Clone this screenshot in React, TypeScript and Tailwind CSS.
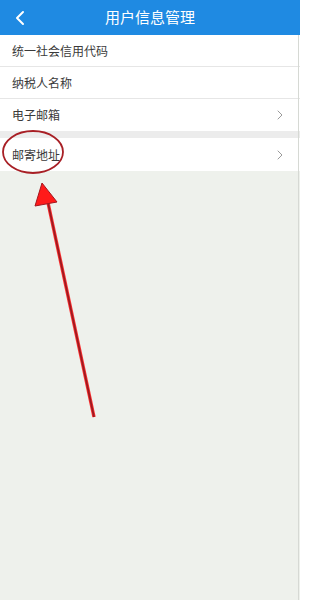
import { ChevronLeft, ChevronRight } from "lucide-react";

const font = { fontFamily: '"Noto Sans CJK SC", "Noto Sans", sans-serif' };

type RowProps = {
  label: string;
  arrow?: boolean;
  border?: boolean;
};

function Row({ label, arrow, border }: RowProps) {
  return (
    <div
      className={
        "flex items-center justify-between h-8 pl-3 pr-3 bg-white " +
        (border ? "border-b border-[#e6e6e6]" : "")
      }
    >
      <span className="text-[12px] text-[#3a3a3a]">{label}</span>
      {arrow && <ChevronRight className="w-4 h-4 text-[#9a9a9a]" strokeWidth={1.5} />}
    </div>
  );
}

export default function App() {
  return (
    <div className="relative w-[300px] h-[600px] bg-[#eef1ec] overflow-hidden" style={font}>
      <div className="relative flex items-center justify-center h-[35px] bg-[#1f8ae2]">
        <ChevronLeft className="absolute left-2 w-6 h-6 text-white" strokeWidth={2} />
        <span className="text-[15px] text-white">用户信息管理</span>
      </div>
      <div className="bg-white">
        <Row label="统一社会信用代码" border />
        <Row label="纳税人名称" border />
        <Row label="电子邮箱" arrow />
      </div>
      <div className="h-[7px] bg-[#ececec]" />
      <div className="h-[33px] flex items-center justify-between pl-3 pr-3 bg-white">
        <span className="text-[12px] text-[#3a3a3a]">邮寄地址</span>
        <ChevronRight className="w-4 h-4 text-[#9a9a9a]" strokeWidth={1.5} />
      </div>

      <svg className="absolute left-0 top-0 pointer-events-none" width="300" height="600" viewBox="0 0 300 600">
        <line x1="298.5" y1="35" x2="298.5" y2="600" stroke="#d6d9d4" strokeWidth="1" />
        <ellipse cx="33" cy="152" rx="30" ry="21" fill="none" stroke="#a81f25" strokeWidth="1.8" />
        <line x1="94" y1="417" x2="47" y2="198" stroke="#ff3030" strokeWidth="3.4" />
        <line x1="94" y1="417" x2="47" y2="198" stroke="#9e1a20" strokeWidth="1.8" />
        <polygon points="42,183 35,206 57,202" fill="#ff1a1a" stroke="#a3171f" strokeWidth="1" />
      </svg>
    </div>
  );
}
